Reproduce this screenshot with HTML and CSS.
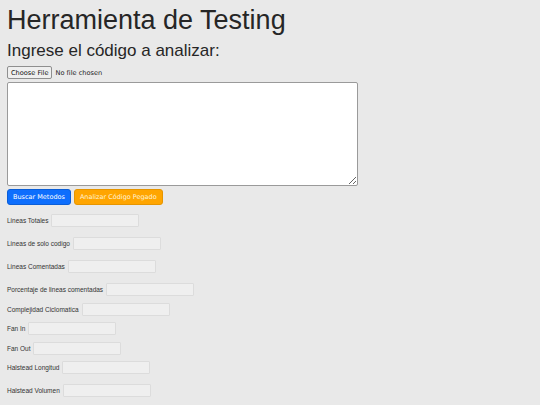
FILE: index.html
```html
<!DOCTYPE html>
<html lang="es">
<head>
<meta charset="utf-8">
<title>Herramienta de Testing</title>
<link rel="stylesheet" href="styles.css">
</head>
<body>
  <h1 class="title">Herramienta de Testing</h1>
  <h2 class="subtitle">Ingrese el código a analizar:</h2>
  <input class="file" type="file">
  <textarea class="code"></textarea>
  <div class="actions">
    <button class="btn btn-blue">Buscar Metodos</button>
    <button class="btn btn-orange">Analizar Código Pegado</button>
  </div>
  <div class="metrics">
    <div class="field"><label>Lineas Totales</label><input class="box" type="text"></div>
    <div class="field"><label>Lineas de solo codigo</label><input class="box" type="text"></div>
    <div class="field"><label>Lineas Comentadas</label><input class="box" type="text"></div>
    <div class="field"><label>Porcentaje de lineas comentadas</label><input class="box" type="text"></div>
    <div class="field tight-a"><label>Complejidad Ciclomatica</label><input class="box" type="text"></div>
    <div class="field tight-b"><label>Fan In</label><input class="box" type="text"></div>
    <div class="field tight-a"><label>Fan Out</label><input class="box" type="text"></div>
    <div class="field tight-b"><label>Halstead Longitud</label><input class="box" type="text"></div>
    <div class="field"><label>Halstead Volumen</label><input class="box" type="text"></div>
  </div>
</body>
</html>
```
FILE: styles.css
```css
html, body {
  margin: 0;
  background: #e9e9e9;
}
body {
  padding: 0 7px;
  font-family: "Liberation Sans", Arial, sans-serif;
  color: #222;
}
.title {
  margin: 4px 0 0;
  font-size: 27px;
  line-height: 32px;
  font-weight: normal;
  color: #262626;
}
.subtitle {
  margin: 5px 0 0;
  font-size: 17px;
  line-height: 20px;
  font-weight: normal;
  color: #262626;
}
.file {
  display: block;
  margin-top: 5px;
  height: 13px;
  font-family: "DejaVu Sans", sans-serif;
  font-size: 6.6px;
  color: #222;
}
.file::file-selector-button {
  font-family: "DejaVu Sans", sans-serif;
  font-size: 6.6px;
  height: 13px;
  padding: 0 3px;
  margin-right: 3px;
  background: #efefef;
  border: 1px solid #8f8f8f;
  border-radius: 2px;
  color: #111;
}
.code {
  display: block;
  box-sizing: border-box;
  margin: 3px 0 0;
  width: 351px;
  height: 104px;
  background: #fff;
  border: 1px solid #9a9a9a;
  border-radius: 2px;
  padding: 2px;
}
.actions {
  display: flex;
  gap: 3px;
  margin-top: 3px;
}
.btn {
  height: 16px;
  padding: 0 5px;
  font-family: "DejaVu Sans", sans-serif;
  font-size: 6.5px;
  border-radius: 3px;
  border: 1px solid transparent;
}
.btn-blue {
  background: #0d6efd;
  border-color: #0b5ed7;
  color: #fff;
}
.btn-orange {
  background: #ffa500;
  border-color: #e69500;
  color: #fff3d6;
}
.metrics {
  display: flex;
  flex-direction: column;
  margin-top: -1px;
}
.field {
  display: flex;
  align-items: center;
  gap: 3px;
  height: 13px;
  margin-top: 10px;
  font-size: 6.5px;
  color: #333;
}
.field.tight-a { margin-top: 7px; }
.field.tight-b { margin-top: 6px; }
.box {
  box-sizing: border-box;
  width: 88px;
  height: 13px;
  background: #efefef;
  border: 1px solid #dcdcdc;
  border-radius: 1px;
  padding: 0;
}
```
